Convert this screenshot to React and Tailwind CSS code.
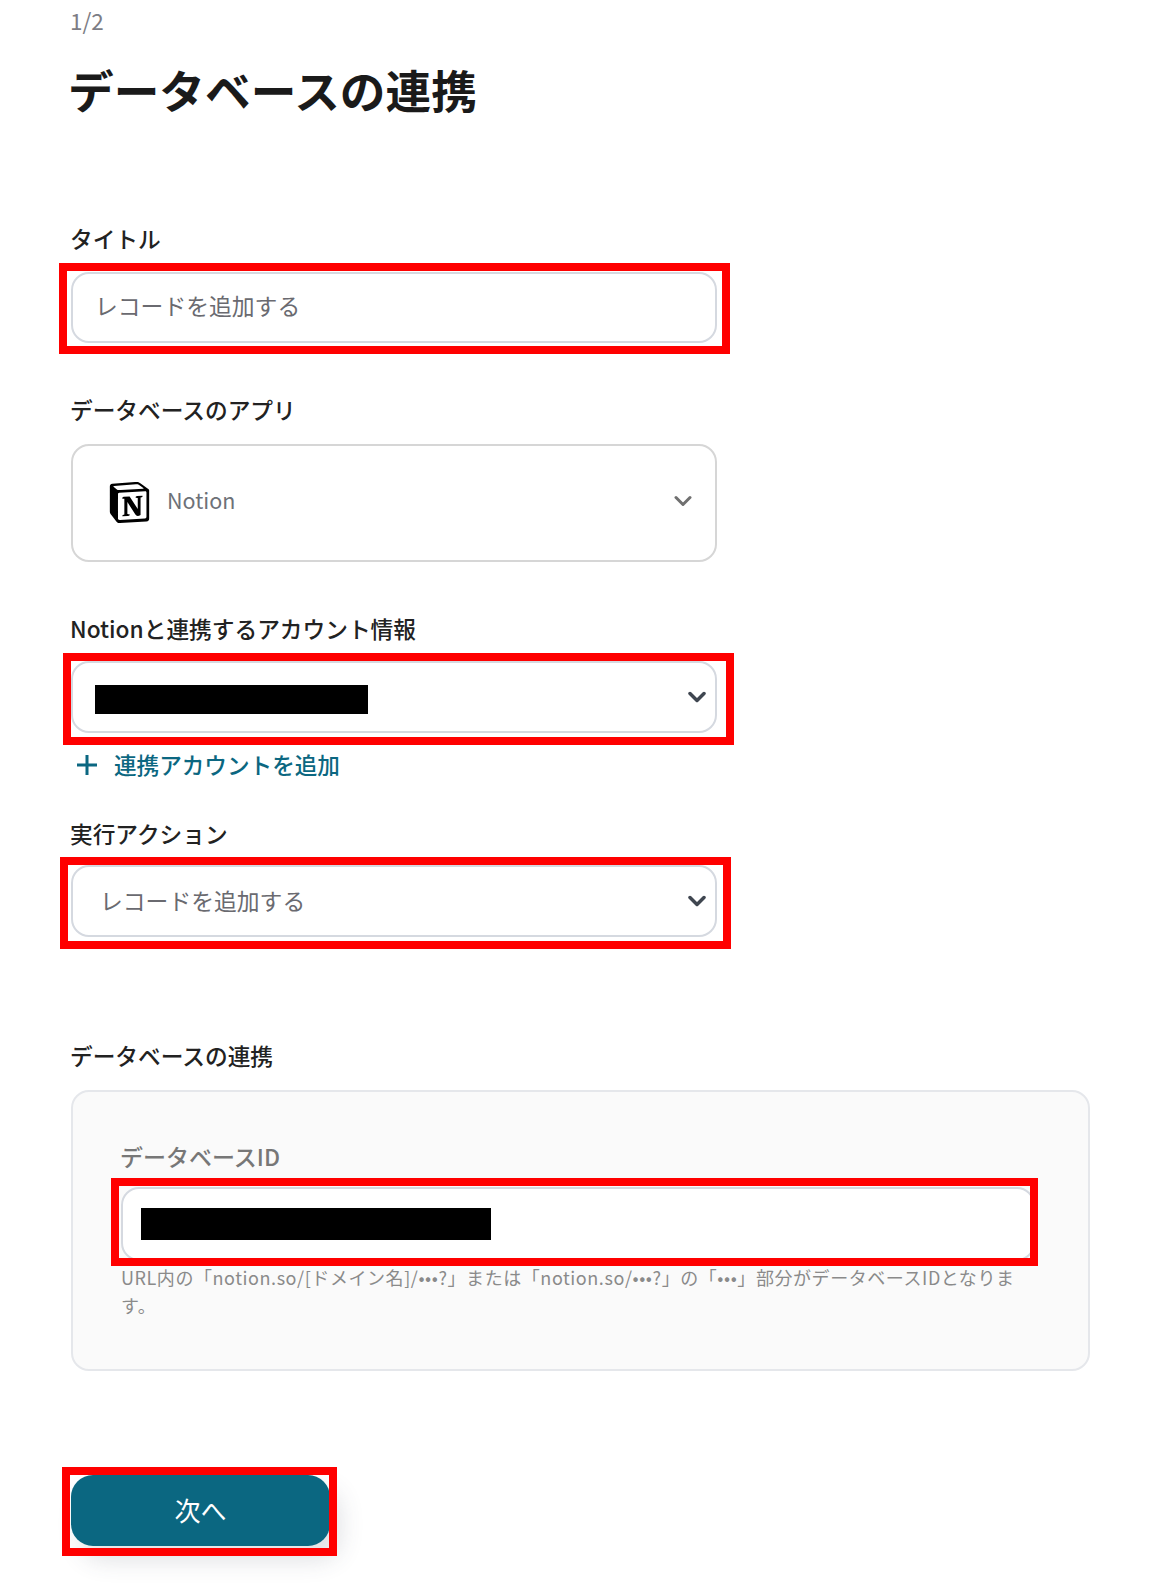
import React from "react";
import { SiNotion } from "react-icons/si";

const FONT = "font-['Noto_Sans_CJK_JP','Noto_Sans',sans-serif]";

function Chevron({ className, width = 3 }) {
  return (
    <svg viewBox="0 0 18 12" fill="none" className={className} stroke="currentColor" strokeLinecap="round" strokeLinejoin="round">
      <path d="M2 2.5 L9 9.5 L16 2.5" strokeWidth={width} />
    </svg>
  );
}

function Mark({ className }) {
  return <div className={`absolute border-[8px] border-[#ff0000] pointer-events-none ${className}`} />;
}

function Label({ children, className = "" }) {
  return <div className={`-ml-[1px] text-[22.7px] leading-[28px] font-medium text-[#222222] ${className}`}>{children}</div>;
}

export default function App() {
  return (
    <div className={`${FONT} bg-white w-[1167px] h-[1587px] overflow-hidden pl-[71px]`}>
      <div className="-ml-[1px] text-[22.5px] leading-[28px] pt-[6px] text-[#7d7d85]">1/2</div>
      <h1 className="-ml-[3px] mt-[20px] text-[45.7px] leading-[70px] font-bold text-[#1a1a1a]">データベースの連携</h1>

      <Label className="mt-[101px]">タイトル</Label>
      <div className="relative mt-[19px] w-[646px]">
        <div className="h-[71px] rounded-[18px] border-2 border-[#d5d9e0] bg-white flex items-center pl-[22px] pb-[2px] text-[22.8px] text-[#6a6a70]">レコードを追加する</div>
        <Mark className="-left-[12px] -right-[13px] -top-[9px] -bottom-[11px]" />
      </div>

      <Label className="mt-[53px]">データベースのアプリ</Label>
      <div className="mt-[20px] w-[646px] h-[118px] rounded-[18px] border-2 border-[#d6d6d6] bg-white flex items-center pl-[36px] pr-[23px]">
        <SiNotion className="w-[41px] h-[41px] -mt-[1px] text-black shrink-0" />
        <span className="ml-[17px] -mt-[6px] text-[21.5px] text-[#6d7178]">Notion</span>
        <Chevron className="ml-auto -mt-[4px] w-[18px] h-[12px] text-[#707070]" />
      </div>

      <Label className="mt-[53px]">Notionと連携するアカウント情報</Label>
      <div className="relative mt-[18px] w-[646px]">
        <div className="h-[72px] rounded-[18px] border-2 border-[#d5d9e0] bg-white flex items-center pl-[22px] pr-[9px]">
          <div className="w-[273px] h-[29px] bg-black mt-[5px]" />
          <Chevron width={3.5} className="ml-auto w-[18px] h-[12px] text-[#3f4650]" />
        </div>
        <Mark className="-left-[8px] -right-[17px] -top-[8px] -bottom-[12px]" />
      </div>

      <div className="mt-[18px] ml-[6px] flex items-center gap-[17px] text-[#0b6781]">
        <svg viewBox="0 0 20 20" className="w-[20px] h-[20px]" fill="none" stroke="currentColor" strokeWidth="3"><path d="M10 0 V20 M0 10 H20" /></svg>
        <span className="text-[22.6px] leading-[28px] font-medium">連携アカウントを追加</span>
      </div>

      <Label className="mt-[41px]">実行アクション</Label>
      <div className="relative mt-[17px] w-[646px]">
        <div className="h-[72px] rounded-[18px] border-2 border-[#d5d9e0] bg-white flex items-center pl-[27px] pr-[9px] text-[22.8px] text-[#6a6a70]">
          レコードを追加する
          <Chevron width={3.5} className="ml-auto w-[18px] h-[12px] text-[#3f4650]" />
        </div>
        <Mark className="-left-[11px] -right-[14px] -top-[8px] -bottom-[12px]" />
      </div>

      <Label className="mt-[105px]">データベースの連携</Label>
      <div className="mt-[20px] w-[1019px] h-[281px] rounded-[18px] border-2 border-[#e5e7eb] bg-[#fafafa] pl-[47px] pt-[50px]">
        <div className="text-[23px] leading-[28px] font-medium text-[#777777]">データベースID</div>
        <div className="relative mt-[17px] ml-[1px] w-[914px]">
          <div className="h-[74px] rounded-[18px] border-2 border-[#d5d9e0] bg-white flex items-center pl-[18px]">
            <div className="w-[350px] h-[32px] bg-black" />
          </div>
          <Mark className="-left-[10px] -right-[3px] -top-[9px] -bottom-[5px]" />
        </div>
        <p className="mt-[2px] ml-[1px] w-[895px] text-[18px] leading-[28px] tracking-[0.56px] text-[#8a8a8a]">URL内の「notion.so/[ドメイン名]/•••?」または「notion.so/•••?」の「•••」部分がデータベースIDとなります。</p>
      </div>

      <div className="relative mt-[104px] w-[259px]">
        <div className="h-[71px] rounded-[22px] bg-[#0b6781] flex items-center justify-center pb-[2px] text-[26px] text-white shadow-[10px_14px_24px_rgba(60,70,90,0.16)]">次へ</div>
        <Mark className="-left-[9px] -right-[7px] -top-[8px] -bottom-[10px]" />
      </div>
    </div>
  );
}
